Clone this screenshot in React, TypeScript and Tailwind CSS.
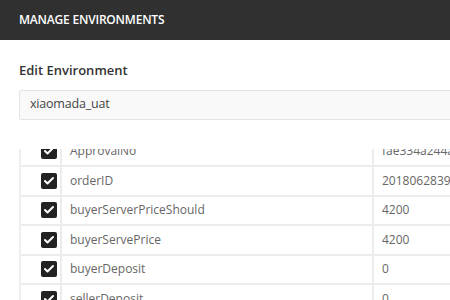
import { Check } from "lucide-react";

const rows = [
  { name: "ApprovalNo", value: "fae334a244a5" },
  { name: "orderID", value: "201806283947" },
  { name: "buyerServerPriceShould", value: "4200" },
  { name: "buyerServePrice", value: "4200" },
  { name: "buyerDeposit", value: "0" },
  { name: "sellerDeposit", value: "0" },
];

export default function App() {
  return (
    <div className="w-[450px] h-[300px] overflow-hidden bg-white font-['Open_Sans',sans-serif]">
      <div className="h-10 bg-[#303030] flex items-center px-[19px]">
        <h1 className="text-white text-[12px] font-semibold tracking-[-0.2px]">MANAGE ENVIRONMENTS</h1>
      </div>

      <div className="pl-[19px] w-[520px]">
        <h2 className="mt-[21px] text-[13px] font-semibold text-[#333]">Edit Environment</h2>

        <div className="mt-[9px] h-[30px] border border-[#e4e4e4] bg-[#f9f9f9] rounded-[2px] flex items-center px-[10px]">
          <span className="text-[12.5px] tracking-[-0.2px] text-[#444]">xiaomada_uat</span>
        </div>

        <div className="mt-[29px] h-[200px] overflow-hidden border-l-2 border-[#eeeeee]">
          <table className="-mt-[12px] w-[500px] border-collapse text-[12px] text-[#666]">
            <tbody>
              {rows.map((r) => (
                <tr key={r.name} className="h-[29.5px] border-b-2 border-[#ececec]">
                  <td className="w-[40px] border-r-2 border-[#ececec] pl-[20px]">
                    <div className="w-4 h-4 rounded-[2px] bg-[#222] flex items-center justify-center">
                      <Check className="w-3 h-3 text-white" strokeWidth={4} />
                    </div>
                  </td>
                  <td className="w-[312px] border-r-2 border-[#ececec] pl-[8px]">{r.name}</td>
                  <td className="pl-[8px]">{r.value}</td>
                </tr>
              ))}
            </tbody>
          </table>
        </div>
      </div>
    </div>
  );
}
